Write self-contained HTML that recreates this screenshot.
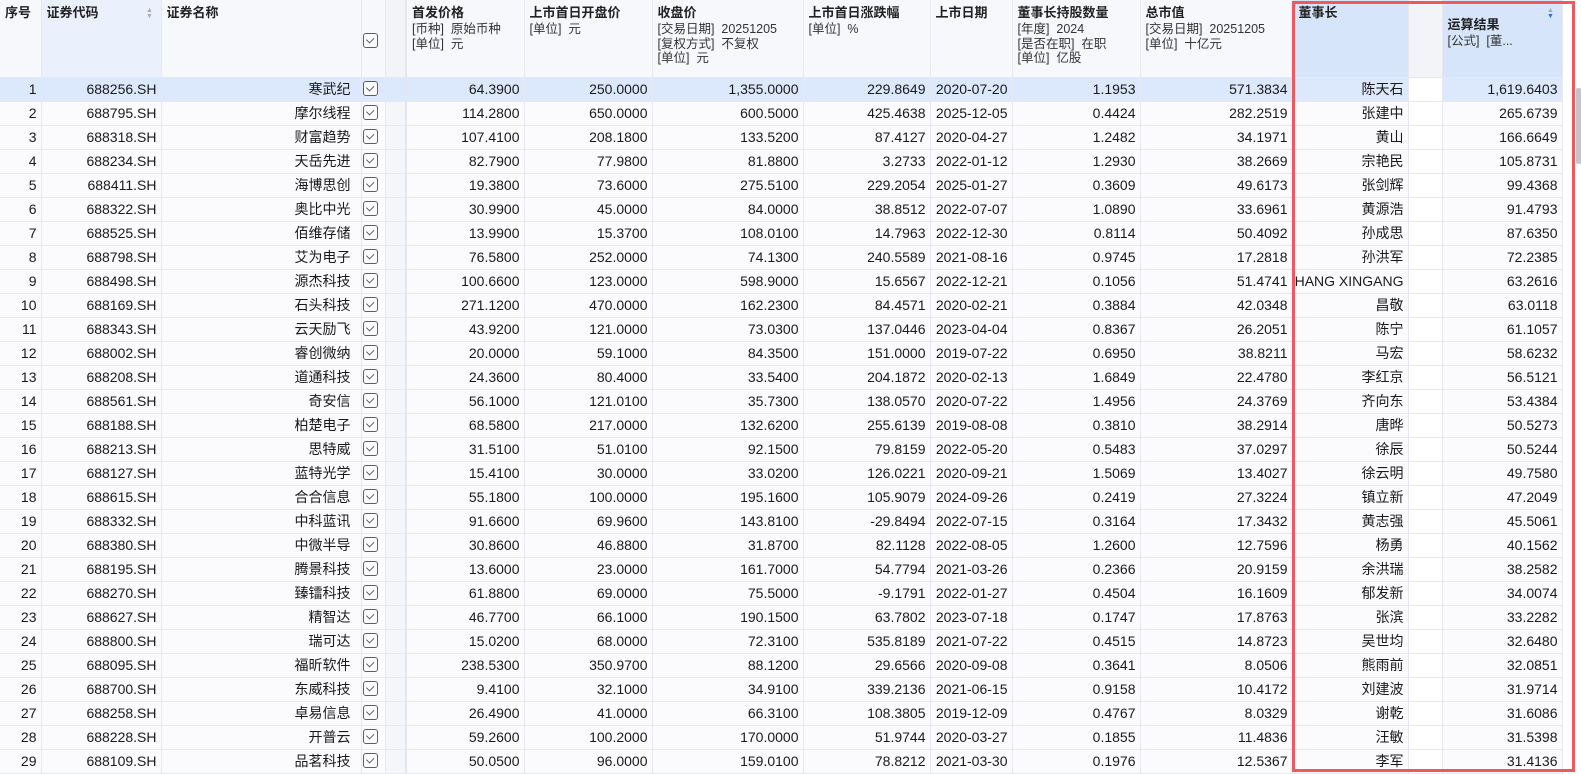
<!DOCTYPE html>
<html><head><meta charset="utf-8">
<style>
*{margin:0;padding:0;box-sizing:border-box}
body{width:1581px;height:772px;overflow:hidden;background:#fff;font-family:"Liberation Sans","Noto Sans CJK SC",sans-serif;color:#1a1a1a;position:relative}
table{position:absolute;left:0;top:0;border-collapse:collapse;table-layout:fixed;width:1562px}
td,th{border-right:1px solid #e8e9f0;border-bottom:1px solid #e8e9f0;overflow:hidden;white-space:nowrap}
th{height:77px;vertical-align:top;text-align:left;font-weight:normal;background:#f7f8fb;padding:5px 4px 0 5px;font-size:12.5px;line-height:14.5px;color:#333}
th b{display:block;font-size:13px;font-weight:bold;color:#222;line-height:16px;margin-bottom:1px}
td{height:24px;font-size:14px;text-align:right;padding:0 4px 0 2px;line-height:23px;background:#fbfbfd}
tr.sel td{background:#dce8fb}
td.g{background:#f5f6f9;border-right:2px solid #e4e6ee}
tr.sel td.g{background:#dce8fb}
td.w{background:#fff}
tr.sel td.w{background:#fff}
th.g{background:#f3f4f8;border-right:2px solid #e4e6ee}
th.lb{background:#eaf1fd}
th.db{background:#d7e5fb}
td.nm{padding-right:10px}
td.ck{text-align:left;padding-left:1px}
.cb{display:inline-block;width:15px;height:15px;border:1.5px solid #5b5b78;border-radius:3px;vertical-align:middle;position:relative;top:-1px;background:#fff}
.cb:after{content:"";position:absolute;width:6px;height:3.5px;border-left:1.6px solid #5b5b78;border-bottom:1.6px solid #5b5b78;transform:rotate(-45deg);transform-origin:left top;top:6px;left:2px}
.fl{display:flex;justify-content:flex-end;white-space:nowrap}
.red{position:absolute;left:1292px;top:1px;width:283px;height:771px;border:3px solid #ee5a5a;pointer-events:none}
.sb{position:absolute;left:1576px;top:88px;width:5px;height:76px;background:#c4c4cc;border-radius:2px}
.arr{position:absolute;font-size:7px;line-height:6px;color:#aab}
</style></head><body>
<table>
<colgroup><col style="width:41px"><col style="width:120px"><col style="width:200px"><col style="width:24px"><col style="width:21px"><col style="width:118px"><col style="width:128px"><col style="width:151px"><col style="width:127px"><col style="width:82px"><col style="width:128px"><col style="width:152px"><col style="width:116px"><col style="width:34px"><col style="width:120px"></colgroup>
<tr>
<th><b>序号</b></th>
<th class="lb"><b>证券代码</b></th>
<th><b>证券名称</b></th>
<th style="padding:34px 0 0 1px"><span class="cb"></span></th>
<th class="g"></th>
<th><b>首发价格</b>[币种]&nbsp; 原始币种<br>[单位]&nbsp; 元</th>
<th><b>上市首日开盘价</b>[单位]&nbsp; 元</th>
<th><b>收盘价</b>[交易日期]&nbsp; 20251205<br>[复权方式]&nbsp; 不复权<br>[单位]&nbsp; 元</th>
<th><b>上市首日涨跌幅</b>[单位]&nbsp; %</th>
<th><b>上市日期</b></th>
<th><b>董事长持股数量</b>[年度]&nbsp; 2024<br>[是否在职]&nbsp; 在职<br>[单位]&nbsp; 亿股</th>
<th><b>总市值</b>[交易日期]&nbsp; 20251205<br>[单位]&nbsp; 十亿元</th>
<th class="db" style="padding-left:6px"><b>董事长</b></th>
<th class="g" style="border-right:1px solid #e8e9f0"></th>
<th class="db" style="padding-top:17px"><b>运算结果</b>[公式]&nbsp; [董...</th>
</tr>
<tr class="sel"><td>1</td><td>688256.SH</td><td class="nm">寒武纪</td><td class="ck"><span class="cb"></span></td><td class="g"></td><td>64.3900</td><td>250.0000</td><td>1,355.0000</td><td>229.8649</td><td>2020-07-20</td><td>1.1953</td><td>571.3834</td><td>陈天石</td><td class="w"></td><td>1,619.6403</td></tr>
<tr><td>2</td><td>688795.SH</td><td class="nm">摩尔线程</td><td class="ck"><span class="cb"></span></td><td class="g"></td><td>114.2800</td><td>650.0000</td><td>600.5000</td><td>425.4638</td><td>2025-12-05</td><td>0.4424</td><td>282.2519</td><td>张建中</td><td class="w"></td><td>265.6739</td></tr>
<tr><td>3</td><td>688318.SH</td><td class="nm">财富趋势</td><td class="ck"><span class="cb"></span></td><td class="g"></td><td>107.4100</td><td>208.1800</td><td>133.5200</td><td>87.4127</td><td>2020-04-27</td><td>1.2482</td><td>34.1971</td><td>黄山</td><td class="w"></td><td>166.6649</td></tr>
<tr><td>4</td><td>688234.SH</td><td class="nm">天岳先进</td><td class="ck"><span class="cb"></span></td><td class="g"></td><td>82.7900</td><td>77.9800</td><td>81.8800</td><td>3.2733</td><td>2022-01-12</td><td>1.2930</td><td>38.2669</td><td>宗艳民</td><td class="w"></td><td>105.8731</td></tr>
<tr><td>5</td><td>688411.SH</td><td class="nm">海博思创</td><td class="ck"><span class="cb"></span></td><td class="g"></td><td>19.3800</td><td>73.6000</td><td>275.5100</td><td>229.2054</td><td>2025-01-27</td><td>0.3609</td><td>49.6173</td><td>张剑辉</td><td class="w"></td><td>99.4368</td></tr>
<tr><td>6</td><td>688322.SH</td><td class="nm">奥比中光</td><td class="ck"><span class="cb"></span></td><td class="g"></td><td>30.9900</td><td>45.0000</td><td>84.0000</td><td>38.8512</td><td>2022-07-07</td><td>1.0890</td><td>33.6961</td><td>黄源浩</td><td class="w"></td><td>91.4793</td></tr>
<tr><td>7</td><td>688525.SH</td><td class="nm">佰维存储</td><td class="ck"><span class="cb"></span></td><td class="g"></td><td>13.9900</td><td>15.3700</td><td>108.0100</td><td>14.7963</td><td>2022-12-30</td><td>0.8114</td><td>50.4092</td><td>孙成思</td><td class="w"></td><td>87.6350</td></tr>
<tr><td>8</td><td>688798.SH</td><td class="nm">艾为电子</td><td class="ck"><span class="cb"></span></td><td class="g"></td><td>76.5800</td><td>252.0000</td><td>74.1300</td><td>240.5589</td><td>2021-08-16</td><td>0.9745</td><td>17.2818</td><td>孙洪军</td><td class="w"></td><td>72.2385</td></tr>
<tr><td>9</td><td>688498.SH</td><td class="nm">源杰科技</td><td class="ck"><span class="cb"></span></td><td class="g"></td><td>100.6600</td><td>123.0000</td><td>598.9000</td><td>15.6567</td><td>2022-12-21</td><td>0.1056</td><td>51.4741</td><td><div class="fl">ZHANG XINGANG</div></td><td class="w"></td><td>63.2616</td></tr>
<tr><td>10</td><td>688169.SH</td><td class="nm">石头科技</td><td class="ck"><span class="cb"></span></td><td class="g"></td><td>271.1200</td><td>470.0000</td><td>162.2300</td><td>84.4571</td><td>2020-02-21</td><td>0.3884</td><td>42.0348</td><td>昌敬</td><td class="w"></td><td>63.0118</td></tr>
<tr><td>11</td><td>688343.SH</td><td class="nm">云天励飞</td><td class="ck"><span class="cb"></span></td><td class="g"></td><td>43.9200</td><td>121.0000</td><td>73.0300</td><td>137.0446</td><td>2023-04-04</td><td>0.8367</td><td>26.2051</td><td>陈宁</td><td class="w"></td><td>61.1057</td></tr>
<tr><td>12</td><td>688002.SH</td><td class="nm">睿创微纳</td><td class="ck"><span class="cb"></span></td><td class="g"></td><td>20.0000</td><td>59.1000</td><td>84.3500</td><td>151.0000</td><td>2019-07-22</td><td>0.6950</td><td>38.8211</td><td>马宏</td><td class="w"></td><td>58.6232</td></tr>
<tr><td>13</td><td>688208.SH</td><td class="nm">道通科技</td><td class="ck"><span class="cb"></span></td><td class="g"></td><td>24.3600</td><td>80.4000</td><td>33.5400</td><td>204.1872</td><td>2020-02-13</td><td>1.6849</td><td>22.4780</td><td>李红京</td><td class="w"></td><td>56.5121</td></tr>
<tr><td>14</td><td>688561.SH</td><td class="nm">奇安信</td><td class="ck"><span class="cb"></span></td><td class="g"></td><td>56.1000</td><td>121.0100</td><td>35.7300</td><td>138.0570</td><td>2020-07-22</td><td>1.4956</td><td>24.3769</td><td>齐向东</td><td class="w"></td><td>53.4384</td></tr>
<tr><td>15</td><td>688188.SH</td><td class="nm">柏楚电子</td><td class="ck"><span class="cb"></span></td><td class="g"></td><td>68.5800</td><td>217.0000</td><td>132.6200</td><td>255.6139</td><td>2019-08-08</td><td>0.3810</td><td>38.2914</td><td>唐晔</td><td class="w"></td><td>50.5273</td></tr>
<tr><td>16</td><td>688213.SH</td><td class="nm">思特威</td><td class="ck"><span class="cb"></span></td><td class="g"></td><td>31.5100</td><td>51.0100</td><td>92.1500</td><td>79.8159</td><td>2022-05-20</td><td>0.5483</td><td>37.0297</td><td>徐辰</td><td class="w"></td><td>50.5244</td></tr>
<tr><td>17</td><td>688127.SH</td><td class="nm">蓝特光学</td><td class="ck"><span class="cb"></span></td><td class="g"></td><td>15.4100</td><td>30.0000</td><td>33.0200</td><td>126.0221</td><td>2020-09-21</td><td>1.5069</td><td>13.4027</td><td>徐云明</td><td class="w"></td><td>49.7580</td></tr>
<tr><td>18</td><td>688615.SH</td><td class="nm">合合信息</td><td class="ck"><span class="cb"></span></td><td class="g"></td><td>55.1800</td><td>100.0000</td><td>195.1600</td><td>105.9079</td><td>2024-09-26</td><td>0.2419</td><td>27.3224</td><td>镇立新</td><td class="w"></td><td>47.2049</td></tr>
<tr><td>19</td><td>688332.SH</td><td class="nm">中科蓝讯</td><td class="ck"><span class="cb"></span></td><td class="g"></td><td>91.6600</td><td>69.9600</td><td>143.8100</td><td>-29.8494</td><td>2022-07-15</td><td>0.3164</td><td>17.3432</td><td>黄志强</td><td class="w"></td><td>45.5061</td></tr>
<tr><td>20</td><td>688380.SH</td><td class="nm">中微半导</td><td class="ck"><span class="cb"></span></td><td class="g"></td><td>30.8600</td><td>46.8800</td><td>31.8700</td><td>82.1128</td><td>2022-08-05</td><td>1.2600</td><td>12.7596</td><td>杨勇</td><td class="w"></td><td>40.1562</td></tr>
<tr><td>21</td><td>688195.SH</td><td class="nm">腾景科技</td><td class="ck"><span class="cb"></span></td><td class="g"></td><td>13.6000</td><td>23.0000</td><td>161.7000</td><td>54.7794</td><td>2021-03-26</td><td>0.2366</td><td>20.9159</td><td>余洪瑞</td><td class="w"></td><td>38.2582</td></tr>
<tr><td>22</td><td>688270.SH</td><td class="nm">臻镭科技</td><td class="ck"><span class="cb"></span></td><td class="g"></td><td>61.8800</td><td>69.0000</td><td>75.5000</td><td>-9.1791</td><td>2022-01-27</td><td>0.4504</td><td>16.1609</td><td>郁发新</td><td class="w"></td><td>34.0074</td></tr>
<tr><td>23</td><td>688627.SH</td><td class="nm">精智达</td><td class="ck"><span class="cb"></span></td><td class="g"></td><td>46.7700</td><td>66.1000</td><td>190.1500</td><td>63.7802</td><td>2023-07-18</td><td>0.1747</td><td>17.8763</td><td>张滨</td><td class="w"></td><td>33.2282</td></tr>
<tr><td>24</td><td>688800.SH</td><td class="nm">瑞可达</td><td class="ck"><span class="cb"></span></td><td class="g"></td><td>15.0200</td><td>68.0000</td><td>72.3100</td><td>535.8189</td><td>2021-07-22</td><td>0.4515</td><td>14.8723</td><td>吴世均</td><td class="w"></td><td>32.6480</td></tr>
<tr><td>25</td><td>688095.SH</td><td class="nm">福昕软件</td><td class="ck"><span class="cb"></span></td><td class="g"></td><td>238.5300</td><td>350.9700</td><td>88.1200</td><td>29.6566</td><td>2020-09-08</td><td>0.3641</td><td>8.0506</td><td>熊雨前</td><td class="w"></td><td>32.0851</td></tr>
<tr><td>26</td><td>688700.SH</td><td class="nm">东威科技</td><td class="ck"><span class="cb"></span></td><td class="g"></td><td>9.4100</td><td>32.1000</td><td>34.9100</td><td>339.2136</td><td>2021-06-15</td><td>0.9158</td><td>10.4172</td><td>刘建波</td><td class="w"></td><td>31.9714</td></tr>
<tr><td>27</td><td>688258.SH</td><td class="nm">卓易信息</td><td class="ck"><span class="cb"></span></td><td class="g"></td><td>26.4900</td><td>41.0000</td><td>66.3100</td><td>108.3805</td><td>2019-12-09</td><td>0.4767</td><td>8.0329</td><td>谢乾</td><td class="w"></td><td>31.6086</td></tr>
<tr><td>28</td><td>688228.SH</td><td class="nm">开普云</td><td class="ck"><span class="cb"></span></td><td class="g"></td><td>59.2600</td><td>100.2000</td><td>170.0000</td><td>51.9744</td><td>2020-03-27</td><td>0.1855</td><td>11.4836</td><td>汪敏</td><td class="w"></td><td>31.5398</td></tr>
<tr><td>29</td><td>688109.SH</td><td class="nm">品茗科技</td><td class="ck"><span class="cb"></span></td><td class="g"></td><td>50.0500</td><td>96.0000</td><td>159.0100</td><td>78.8212</td><td>2021-03-30</td><td>0.1976</td><td>12.5367</td><td>李军</td><td class="w"></td><td>31.4136</td></tr>
</table>
<div class="arr" style="left:146px;top:8px">▲<br>▼</div>
<div class="arr" style="left:1547px;top:8px">▲<br><span style="color:#2e6be6">▼</span></div>
<div class="sb"></div>
<div class="red"></div>
</body></html>
